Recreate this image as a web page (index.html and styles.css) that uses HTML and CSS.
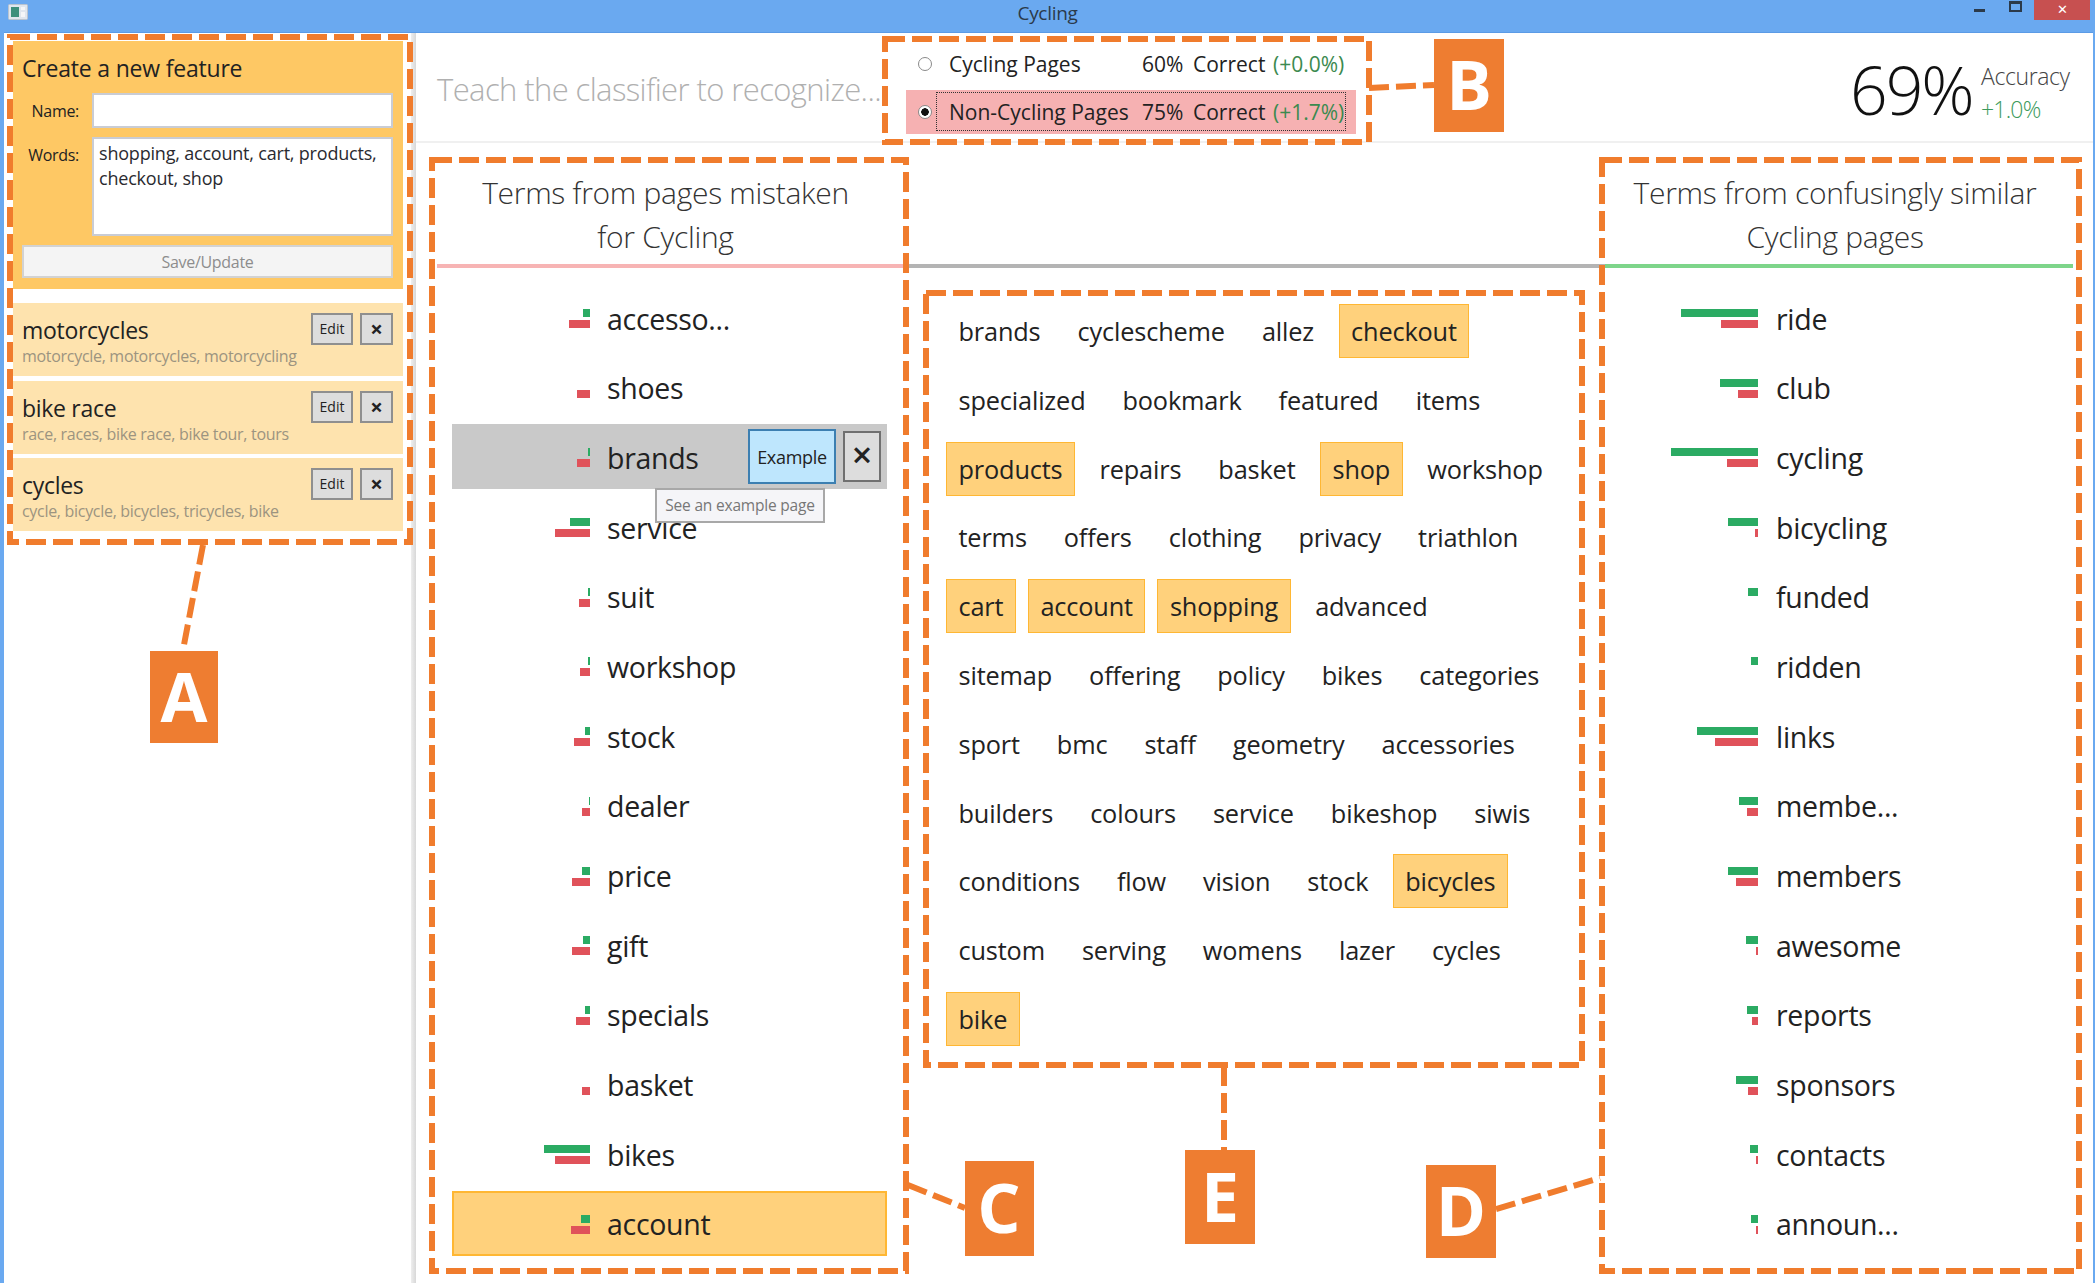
FILE: index.html
```html
<!DOCTYPE html>
<html lang="en">

<head>
    <meta charset="UTF-8">
    <title>Cycling</title>
    <link rel="stylesheet" href="styles.css">
</head>

<body>
    <div class="window">
        <!-- Title bar -->
        <header class="titlebar">
            <svg class="app-icon" width="20" height="16" viewBox="0 0 20 16">
                <rect x="0.5" y="0.5" width="19" height="15" rx="1" fill="#dfe6ee" stroke="#b9c4d0" />
                <rect x="3" y="3" width="8" height="10" fill="#3c8f7c" />
                <rect x="13" y="3" width="4" height="3" fill="#f4f6f8" />
                <rect x="13" y="8" width="4" height="5" fill="#f4f6f8" />
            </svg>
            <div class="title">Cycling</div>
            <div class="controls">
                <span class="ctl-min"></span>
                <span class="ctl-max"></span>
                <span class="ctl-close">&#10005;</span>
            </div>
        </header>

        <div class="content">
            <!-- Feature sidebar -->
            <aside class="sidebar">
                <form class="new-feature">
                    <h2>Create a new feature</h2>
                    <div class="form-grid">
                        <label>Name:</label>
                        <div class="field field-name"></div>
                        <label>Words:</label>
                        <div class="field field-words">shopping, account, cart, products, checkout, shop</div>
                    </div>
                    <div class="save-btn">Save/Update</div>
                </form>

                <div class="feature">
                    <div class="feature-text">
                        <div class="feature-name">motorcycles</div>
                        <div class="feature-words">motorcycle, motorcycles, motorcycling</div>
                    </div>
                    <span class="small-btn btn-edit">Edit</span>
                    <span class="small-btn btn-x">&times;</span>
                </div>
                <div class="feature">
                    <div class="feature-text">
                        <div class="feature-name">bike race</div>
                        <div class="feature-words">race, races, bike race, bike tour, tours</div>
                    </div>
                    <span class="small-btn btn-edit">Edit</span>
                    <span class="small-btn btn-x">&times;</span>
                </div>
                <div class="feature">
                    <div class="feature-text">
                        <div class="feature-name">cycles</div>
                        <div class="feature-words">cycle, bicycle, bicycles, tricycles, bike</div>
                    </div>
                    <span class="small-btn btn-edit">Edit</span>
                    <span class="small-btn btn-x">&times;</span>
                </div>
            </aside>

            <div class="splitter"></div>

            <main class="main">
                <!-- Top bar -->
                <div class="topbar">
                    <div class="prompt">Teach the classifier to recognize...</div>
                    <div class="classes">
                        <div class="class-row">
                            <span class="radio"></span>
                            <span>Cycling Pages</span>
                            <span>60%</span>
                            <span>Correct</span>
                            <span class="delta">(+0.0%)</span>
                        </div>
                        <div class="class-row class-selected">
                            <span class="radio radio-on"></span>
                            <span>Non-Cycling Pages</span>
                            <span>75%</span>
                            <span>Correct</span>
                            <span class="delta">(+1.7%)</span>
                        </div>
                    </div>
                    <div class="accuracy">
                        <div class="acc-value">69%</div>
                        <div class="acc-side">
                            <div class="acc-label">Accuracy</div>
                            <div class="acc-delta">+1.0%</div>
                        </div>
                    </div>
                </div>

                <div class="columns">
                    <!-- Terms from mistaken pages -->
                    <section class="col col-left">
                        <h3 class="col-head head-red">Terms from pages mistaken<br>for Cycling</h3>
                        <ul class="terms">
                            <li><span class="bars"><i class="good" style="width:7px"></i><i class="bad" style="width:21px"></i></span>accesso...</li>
                            <li><span class="bars"><i class="good" style="width:0"></i><i class="bad" style="width:13px"></i></span>shoes</li>
                            <li class="term-hover"><span class="bars"><i class="good" style="width:2px"></i><i class="bad" style="width:13px"></i></span>brands
                                <span class="btn-example">Example</span>
                                <span class="btn-remove">&times;</span>
                                <span class="tooltip">See an example page</span>
                            </li>
                            <li><span class="bars"><i class="good" style="width:20px"></i><i class="bad" style="width:35px"></i></span>service</li>
                            <li><span class="bars"><i class="good" style="width:2px"></i><i class="bad" style="width:11px"></i></span>suit</li>
                            <li><span class="bars"><i class="good" style="width:2px"></i><i class="bad" style="width:10px"></i></span>workshop</li>
                            <li><span class="bars"><i class="good" style="width:5px"></i><i class="bad" style="width:16px"></i></span>stock</li>
                            <li><span class="bars"><i class="good" style="width:1px"></i><i class="bad" style="width:8px"></i></span>dealer</li>
                            <li><span class="bars"><i class="good" style="width:8px"></i><i class="bad" style="width:18px"></i></span>price</li>
                            <li><span class="bars"><i class="good" style="width:7px"></i><i class="bad" style="width:18px"></i></span>gift</li>
                            <li><span class="bars"><i class="good" style="width:5px"></i><i class="bad" style="width:14px"></i></span>specials</li>
                            <li><span class="bars"><i class="good" style="width:0"></i><i class="bad" style="width:8px"></i></span>basket</li>
                            <li><span class="bars"><i class="good" style="width:46px"></i><i class="bad" style="width:35px"></i></span>bikes</li>
                            <li class="term-active"><span class="bars"><i class="good" style="width:9px"></i><i class="bad" style="width:19px"></i></span>account</li>
                        </ul>
                    </section>

                    <!-- Word cloud -->
                    <section class="col col-center">
                        <div class="col-head head-grey"></div>
                        <div class="cloud">
                            <div class="cloud-row"><span>brands</span><span>cyclescheme</span><span>allez</span><span class="hit">checkout</span></div>
                            <div class="cloud-row"><span>specialized</span><span>bookmark</span><span>featured</span><span>items</span></div>
                            <div class="cloud-row"><span class="hit">products</span><span>repairs</span><span>basket</span><span class="hit">shop</span><span>workshop</span></div>
                            <div class="cloud-row"><span>terms</span><span>offers</span><span>clothing</span><span>privacy</span><span>triathlon</span></div>
                            <div class="cloud-row"><span class="hit">cart</span><span class="hit">account</span><span class="hit">shopping</span><span>advanced</span></div>
                            <div class="cloud-row"><span>sitemap</span><span>offering</span><span>policy</span><span>bikes</span><span>categories</span></div>
                            <div class="cloud-row"><span>sport</span><span>bmc</span><span>staff</span><span>geometry</span><span>accessories</span></div>
                            <div class="cloud-row"><span>builders</span><span>colours</span><span>service</span><span>bikeshop</span><span>siwis</span></div>
                            <div class="cloud-row"><span>conditions</span><span>flow</span><span>vision</span><span>stock</span><span class="hit">bicycles</span></div>
                            <div class="cloud-row"><span>custom</span><span>serving</span><span>womens</span><span>lazer</span><span>cycles</span></div>
                            <div class="cloud-row"><span class="hit">bike</span></div>
                        </div>
                    </section>

                    <!-- Terms from similar pages -->
                    <section class="col col-right">
                        <h3 class="col-head head-green">Terms from confusingly similar<br>Cycling pages</h3>
                        <ul class="terms">
                            <li><span class="bars"><i class="good" style="width:77px"></i><i class="bad" style="width:37px"></i></span>ride</li>
                            <li><span class="bars"><i class="good" style="width:38px"></i><i class="bad" style="width:20px"></i></span>club</li>
                            <li><span class="bars"><i class="good" style="width:87px"></i><i class="bad" style="width:31px"></i></span>cycling</li>
                            <li><span class="bars"><i class="good" style="width:30px"></i><i class="bad" style="width:3px"></i></span>bicycling</li>
                            <li><span class="bars"><i class="good" style="width:10px"></i><i class="bad" style="width:0"></i></span>funded</li>
                            <li><span class="bars"><i class="good" style="width:7px"></i><i class="bad" style="width:0"></i></span>ridden</li>
                            <li><span class="bars"><i class="good" style="width:61px"></i><i class="bad" style="width:43px"></i></span>links</li>
                            <li><span class="bars"><i class="good" style="width:19px"></i><i class="bad" style="width:11px"></i></span>membe...</li>
                            <li><span class="bars"><i class="good" style="width:30px"></i><i class="bad" style="width:22px"></i></span>members</li>
                            <li><span class="bars"><i class="good" style="width:12px"></i><i class="bad" style="width:2px"></i></span>awesome</li>
                            <li><span class="bars"><i class="good" style="width:11px"></i><i class="bad" style="width:6px"></i></span>reports</li>
                            <li><span class="bars"><i class="good" style="width:22px"></i><i class="bad" style="width:10px"></i></span>sponsors</li>
                            <li><span class="bars"><i class="good" style="width:8px"></i><i class="bad" style="width:2px"></i></span>contacts</li>
                            <li><span class="bars"><i class="good" style="width:7px"></i><i class="bad" style="width:2px"></i></span>announ...</li>
                        </ul>
                    </section>
                </div>
            </main>
        </div>

        <!-- Figure annotations drawn over the window -->
        <svg class="notes" width="2095" height="1283" viewBox="0 0 2095 1283">
            <g class="note-lines">
                <rect x="10" y="37" width="400" height="505" />
                <rect x="885" y="39" width="484" height="103" />
                <rect x="432" y="160" width="474" height="1111" />
                <rect x="926" y="293" width="656" height="772" />
                <rect x="1602" y="160" width="477" height="1111" />
                <line x1="203" y1="545" x2="183" y2="650" />
                <line x1="1369" y1="88" x2="1434" y2="85" />
                <line x1="908" y1="1185" x2="965" y2="1208" />
                <line x1="1224" y1="1066" x2="1224" y2="1150" />
                <line x1="1496" y1="1209" x2="1600" y2="1178" />
            </g>
            <g class="note-tags">
                <rect x="150" y="651" width="68" height="92" />
                <rect x="1434" y="39" width="70" height="93" />
                <rect x="965" y="1161" width="69" height="95" />
                <rect x="1185" y="1150" width="70" height="94" />
                <rect x="1426" y="1165" width="70" height="93" />
            </g>
            <g class="note-letters">
                <text x="184" y="722">A</text>
                <text x="1469" y="110">B</text>
                <text x="999" y="1233">C</text>
                <text x="1220" y="1222">E</text>
                <text x="1461" y="1236">D</text>
            </g>
        </svg>
    </div>
</body>

</html>
```

FILE: styles.css
```css
* {
    box-sizing: border-box;
}

body {
    margin: 0;
    font-family: "Open Sans", "Noto Sans", sans-serif;
    color: #222;
    background: #fff;
}

.window {
    position: relative;
    width: 2095px;
    height: 1283px;
    border-left: 4px solid #6aa9f0;
    border-right: 2px solid #6aa9f0;
    overflow: hidden;
    display: flex;
    flex-direction: column;
}

/* Title bar */
.titlebar {
    height: 33px;
    margin-left: -4px;
    margin-right: -2px;
    background: #6aa9f0;
    border-bottom: 1px solid #5b9be6;
    display: grid;
    grid-template-columns: 1fr auto 1fr;
    align-items: start;
    flex-shrink: 0;
}

.app-icon {
    margin: 4px 0 0 8px;
}

.title {
    font-size: 19px;
    line-height: 26px;
    letter-spacing: -0.3px;
    color: #2b3a4a;
}

.controls {
    display: flex;
    justify-content: flex-end;
    align-items: flex-start;
    padding-right: 5px;
}

.ctl-min {
    width: 11px;
    height: 3px;
    margin: 9px 24px 0 0;
    background: #2b3a4a;
}

.ctl-max {
    width: 13px;
    height: 11px;
    margin: 1px 12px 0 0;
    border: 2px solid #2b3a4a;
    border-top-width: 3px;
}

.ctl-close {
    width: 56px;
    height: 20px;
    background: #c75050;
    color: #fff;
    font-size: 13px;
    line-height: 19px;
    text-align: center;
}

.content {
    flex: 1;
    display: flex;
    min-height: 0;
}

/* Sidebar */
.sidebar {
    width: 407px;
    padding: 8px 8px 0 9px;
    flex-shrink: 0;
}

.new-feature {
    height: 248px;
    padding: 0 10px 0 9px;
    margin-bottom: 14px;
    background: #fec864;
}

.new-feature h2 {
    margin: 0;
    height: 52px;
    font-size: 23px;
    line-height: 54px;
    font-weight: 400;
    letter-spacing: -0.2px;
}

.form-grid {
    display: grid;
    grid-template-columns: 70px 301px;
    grid-template-rows: 35px 99px;
    row-gap: 9px;
}

.form-grid label {
    font-size: 16px;
    line-height: 36px;
    padding-right: 13px;
    text-align: right;
    letter-spacing: -0.3px;
}

.field {
    background: #fff;
    border: 2px solid #c9ccd4;
}

.field-words {
    padding: 2px 3px 0 5px;
    font-size: 18px;
    line-height: 25px;
    letter-spacing: -0.2px;
    color: #2a2a30;
}

.save-btn {
    height: 33px;
    margin-top: 9px;
    background: #f4f4f4;
    border: 2px solid #d2d2d2;
    color: #8d8d8d;
    font-size: 16px;
    line-height: 31px;
    text-align: center;
    letter-spacing: -0.3px;
}

.feature {
    height: 73px;
    margin-bottom: 4.5px;
    padding: 10px 10px 0 9px;
    background: #fee3ae;
    display: flex;
    align-items: flex-start;
    gap: 7px;
}

.feature-text {
    flex: 1;
    min-width: 0;
    padding-top: 2px;
}

.feature-name {
    font-size: 23px;
    line-height: 30px;
    letter-spacing: -0.3px;
}

.feature-words {
    font-size: 16px;
    line-height: 23px;
    letter-spacing: -0.3px;
    color: #9c9480;
    white-space: nowrap;
}

.small-btn {
    height: 32px;
    background: #dddddd;
    border: 2px solid #8f8f8f;
    text-align: center;
    font-size: 14px;
    line-height: 28px;
}

.btn-edit {
    width: 42px;
}

.btn-x {
    width: 33px;
    font-size: 22px;
    font-weight: 700;
    line-height: 26px;
}

.splitter {
    width: 5px;
    flex-shrink: 0;
    background: linear-gradient(to right, #eee, #d8d8d8);
}

/* Main area */
.main {
    flex: 1;
    min-width: 0;
}

.topbar {
    height: 110px;
    padding: 12px 0 0 21px;
    border-bottom: 2px solid #f0f0f0;
    display: flex;
    align-items: flex-start;
}

.prompt {
    width: 469px;
    margin-top: 22px;
    font-size: 31px;
    line-height: 44px;
    font-weight: 300;
    letter-spacing: -0.6px;
    color: #b0b0b0;
    white-space: nowrap;
}

.classes {
    width: 450px;
    margin-right: 494px;
}

.class-row {
    display: grid;
    grid-template-columns: 31px 193px 51px 80px 1fr;
    align-items: center;
    height: 38px;
    padding-left: 12px;
    font-size: 21px;
    white-space: nowrap;
}

.class-selected {
    height: 44px;
    margin-top: 7px;
    background: #f6b1b2;
    position: relative;
}

/* dotted focus box */
.class-selected::after {
    content: "";
    position: absolute;
    left: 30px;
    right: 10px;
    top: 2px;
    bottom: 3px;
    border: 1px dotted #333;
}

.radio {
    width: 14px;
    height: 14px;
    border: 1px solid #8a8a8a;
    border-radius: 50%;
    background: #fff;
}

.radio-on {
    background: radial-gradient(circle, #111 0, #111 3.5px, #fff 4px);
}

.delta {
    color: #3c8a4f;
}

.accuracy {
    display: flex;
    align-items: flex-start;
    margin-top: -4px;
}

.acc-value {
    width: 131px;
    font-size: 66px;
    line-height: 96px;
    font-weight: 300;
    letter-spacing: -2px;
    color: #111;
}

.acc-side {
    padding-top: 19px;
}

.acc-label {
    font-size: 23px;
    line-height: 33px;
    font-weight: 300;
    letter-spacing: -0.4px;
    color: #444;
}

.acc-delta {
    font-size: 23px;
    line-height: 33px;
    font-weight: 300;
    letter-spacing: -0.8px;
    color: #3c9a5c;
}

.columns {
    display: grid;
    grid-template-columns: 492px 697px 1fr;
}

.col-head {
    height: 125px;
    margin: 0;
    padding-top: 28px;
    font-size: 30px;
    line-height: 44px;
    font-weight: 300;
    letter-spacing: -0.3px;
    text-align: center;
    color: #333;
    border-bottom: 4px solid #bbb;
}

.head-red {
    margin-left: 21px;
    padding-right: 14px;
    border-color: #f7b4b4;
}

.head-green {
    margin-right: 20px;
    padding-right: 8px;
    border-color: #7ed58a;
}

.head-grey {
    border-color: #b4b4b4;
}

/* Term lists */
.terms {
    list-style: none;
    margin: 0;
    padding: 17px 0 0;
    font-size: 28.5px;
    letter-spacing: -0.3px;
}

.terms li {
    position: relative;
    height: 65px;
    margin-bottom: 4.7px;
    padding-top: 2px;
    display: flex;
    align-items: center;
    white-space: nowrap;
}

.col-left .terms li {
    margin-left: 36px;
    width: 435px;
}

.col-left .bars {
    width: 138px;
    margin-right: 17px;
}

.col-right .bars {
    width: 153px;
    margin-right: 18px;
}

.bars {
    display: flex;
    flex-direction: column;
    align-items: flex-end;
    gap: 3px;
    flex-shrink: 0;
}

.bars i {
    display: block;
    height: 8px;
}

.good {
    background: #2bab63;
}

.bad {
    background: #e0525a;
}

.term-hover {
    background: #c9c9c9;
}

.term-active {
    background: #ffd17c;
    border: 2px solid #ffb733;
}

.term-active .bars {
    margin-left: -2px;
}

.btn-example {
    position: absolute;
    left: 296px;
    top: 5px;
    width: 88px;
    height: 55px;
    background: #bee6fd;
    border: 2px solid #3c7fb1;
    font-size: 18px;
    line-height: 52px;
    text-align: center;
    letter-spacing: -0.3px;
}

.btn-remove {
    position: absolute;
    left: 391px;
    top: 7px;
    width: 38px;
    height: 51px;
    background: #dddddd;
    border: 2px solid #707070;
    font-size: 36px;
    font-weight: 600;
    line-height: 44px;
    text-align: center;
}

.tooltip {
    position: absolute;
    left: 203px;
    top: 64px;
    width: 170px;
    height: 35px;
    z-index: 2;
    background: #f5f5f8;
    border: 2px solid #a8a8a8;
    color: #777;
    font-size: 15.5px;
    line-height: 31px;
    text-align: center;
    letter-spacing: -0.2px;
}

/* Word cloud */
.cloud {
    padding: 36px 0 0 38px;
    font-size: 25.3px;
    letter-spacing: -0.15px;
}

.cloud-row {
    display: flex;
    gap: 12px;
    height: 54px;
    margin-bottom: 14.8px;
}

.cloud-row span {
    padding: 0 11.5px;
    line-height: 53px;
    border: 1px solid transparent;
    white-space: nowrap;
}

.cloud-row .hit {
    background: #ffd17c;
    border-color: #ffb733;
}

/* Annotations */
.notes {
    position: absolute;
    left: -4px;
    top: 0;
    pointer-events: none;
}

.note-lines rect,
.note-lines line {
    fill: none;
    stroke: #f07c2d;
    stroke-width: 6;
    stroke-dasharray: 20 7;
}

.note-tags rect {
    fill: #ee7d31;
}

.note-letters text {
    fill: #fff;
    font-family: "Open Sans", sans-serif;
    font-size: 68px;
    font-weight: 700;
    text-anchor: middle;
}
```
